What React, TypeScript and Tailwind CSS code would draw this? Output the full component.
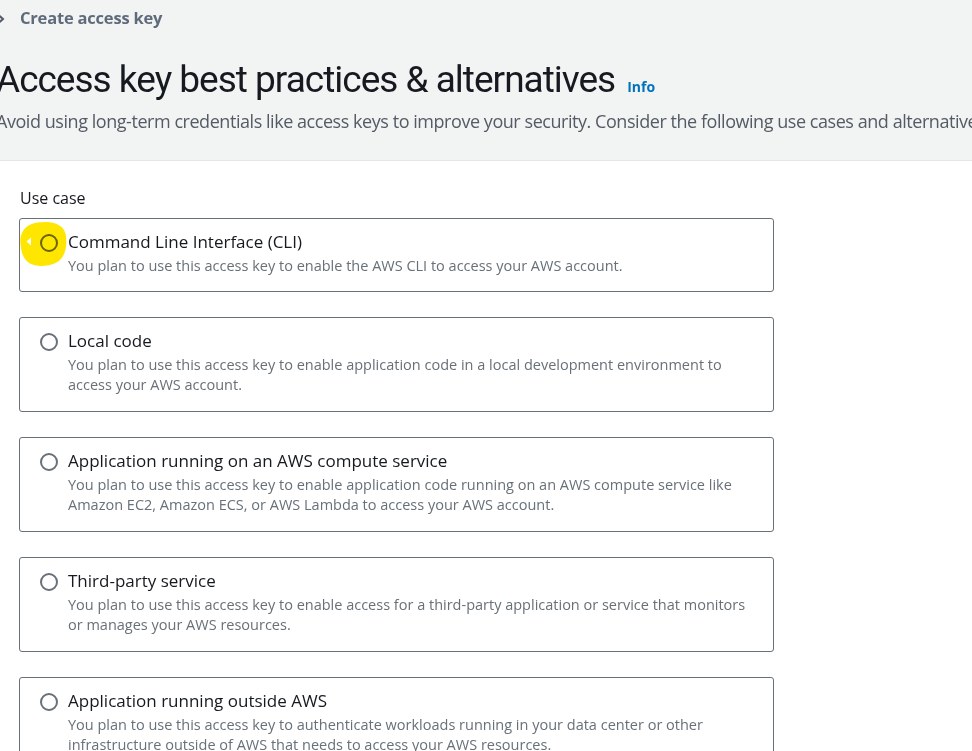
import React, { useState } from "react";

const useCases = [
  {
    id: "cli",
    title: "Command Line Interface (CLI)",
    desc: "You plan to use this access key to enable the AWS CLI to access your AWS account.",
  },
  {
    id: "local",
    title: "Local code",
    desc: "You plan to use this access key to enable application code in a local development environment to access your AWS account.",
  },
  {
    id: "compute",
    title: "Application running on an AWS compute service",
    desc: "You plan to use this access key to enable application code running on an AWS compute service like Amazon EC2, Amazon ECS, or AWS Lambda to access your AWS account.",
  },
  {
    id: "third",
    title: "Third-party service",
    desc: "You plan to use this access key to enable access for a third-party application or service that monitors or manages your AWS resources.",
  },
  {
    id: "outside",
    title: "Application running outside AWS",
    desc: "You plan to use this access key to authenticate workloads running in your data center or other infrastructure outside of AWS that needs to access your AWS resources.",
  },
];

// yellow highlighter mark someone drew over the first radio
const Highlight: React.FC = () => (
  <svg
    className="absolute left-[0px] top-[2px] pointer-events-none mix-blend-multiply"
    width="48"
    height="46"
    viewBox="0 0 48 46"
  >
    <path
      d="M2 12 C5 4 14 1 26 1 C37 1 45 6 46 15 C47 24 46 33 40 39 C33 45 22 46 14 44 C6 42 2 35 1 27 C0 20 0 16 2 12 Z"
      fill="#ffe600"
    />
  </svg>
);

const App: React.FC = () => {
  const [selected, setSelected] = useState<string | null>(null);

  return (
    <div className="bg-white overflow-hidden w-[972px] h-[751px]">
      {/* header */}
      <div className="bg-[#f2f3f3] border-b border-[#e3e6e6] h-[161px] ml-[-4px]">
        <div className="flex items-center gap-[14px] pt-[8px] h-[28px] font-['Open_Sans',sans-serif]">
          <svg width="10" height="10" viewBox="0 0 10 10" className="mt-[1px]">
            <path d="M3 1.5 L7 5 L3 8.5" fill="none" stroke="#545b64" strokeWidth="2" />
          </svg>
          <span className="text-[16.5px] font-bold text-[#5f6b7a] tracking-[-0.2px]">Create access key</span>
        </div>
        <div className="flex items-baseline mt-[30px] whitespace-nowrap">
          <h1 className="text-[37px] leading-[44px] text-[#16191f] font-['Roboto',sans-serif] tracking-[-1px]">
            Access key best practices &amp; alternatives
          </h1>
          <a className="ml-[12px] text-[14px] font-bold text-[#0073bb] font-['Open_Sans',sans-serif]">Info</a>
        </div>
        <p className="mt-[6px] text-[18px] leading-[26px] text-[#545b64] whitespace-nowrap font-['Open_Sans',sans-serif] tracking-[-0.45px]">
          Avoid using long-term credentials like access keys to improve your security. Consider the following use cases and alternatives.
        </p>
      </div>

      {/* body */}
      <div className="pl-[19px] pt-[26px] font-['Open_Sans',sans-serif]">
        <div className="text-[16px] leading-[22px] text-[#16191f] pl-[1px] mb-[9px]">Use case</div>
        <div className="flex flex-col gap-[25px] w-[755px]">
          {useCases.map((uc, i) => (
            <label
              key={uc.id}
              className={
                "relative flex items-start border border-[#687078] rounded-[3px] pl-[20px] pr-[20px] pt-[12px] cursor-pointer " +
                (i === 0 ? "pb-[15px]" : "pb-[16px]")
              }
              onClick={() => setSelected(uc.id)}
            >
              <span className="mt-[3px] w-[18px] h-[18px] rounded-full border-2 border-[#687078] shrink-0 flex items-center justify-center">
                {selected === uc.id && <span className="w-[8px] h-[8px] rounded-full bg-[#0073bb]" />}
              </span>
              <span className="ml-[10px] flex flex-col">
                <span className="text-[17px] leading-[22px] text-[#16191f]">{uc.title}</span>
                <span className="mt-[3px] text-[14.5px] leading-[20px] text-[#687078]">{uc.desc}</span>
              </span>
              {i === 0 && (
                <>
                  <Highlight />
                  <svg className="absolute left-[6px] top-[18px]" width="6" height="9" viewBox="0 0 6 9">
                    <path d="M5 0.5 L0.5 4.5 L5 8.5 Z" fill="#ffffff" />
                  </svg>
                </>
              )}
            </label>
          ))}
        </div>
      </div>
    </div>
  );
};

export default App;
